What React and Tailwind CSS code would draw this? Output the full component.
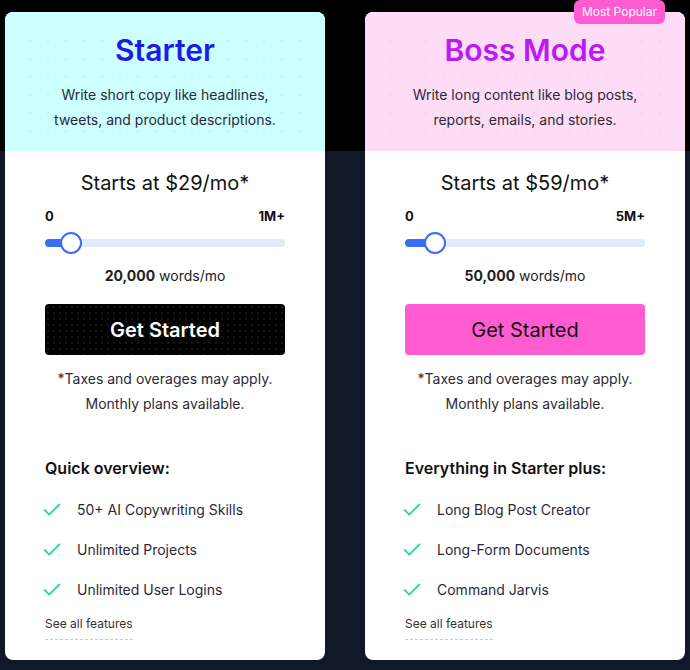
import { Check } from "lucide-react";

const plans = [
  {
    name: "Starter",
    nameColor: "text-[#1c1ce6]",
    head: "bg-[#ccfffd]",
    dots: "bg-[radial-gradient(#bff6f5_1px,transparent_1px)]",
    blurb: ["Write short copy like headlines,", "tweets, and product descriptions."],
    price: "$29",
    max: "1M+",
    words: "20,000",
    pos: 26,
    btn: "bg-black text-white font-semibold bg-[radial-gradient(#15151d_1px,transparent_1px)]",
    listTitle: "Quick overview:",
    features: ["50+ AI Copywriting Skills", "Unlimited Projects", "Unlimited User Logins"],
  },
  {
    name: "Boss Mode",
    nameColor: "text-[#b91cf2]",
    head: "bg-[#ffdcf6]",
    dots: "bg-[radial-gradient(#fad0ef_1px,transparent_1px)]",
    blurb: ["Write long content like blog posts,", "reports, emails, and stories."],
    price: "$59",
    max: "5M+",
    words: "50,000",
    pos: 30,
    btn: "bg-[#ff5cd1] text-[#111] font-normal",
    listTitle: "Everything in Starter plus:",
    features: ["Long Blog Post Creator", "Long-Form Documents", "Command Jarvis"],
    badge: "Most Popular",
  },
];

function Slider({ pos }) {
  return (
    <div className="relative mt-[7px] h-[20px] flex items-center">
      <div className="h-[8px] w-full rounded-full bg-[#e1eafb]" />
      <div className="absolute left-0 top-[6px] h-[8px] rounded-l-full bg-[#3b6cf5]" style={{ width: pos }} />
      <div
        className="absolute top-[-1px] h-[22px] w-[22px] rounded-full border-2 border-[#3b6cf5] bg-white"
        style={{ left: pos - 11 }}
      />
    </div>
  );
}

function Card({ p }) {
  return (
    <div className="relative flex h-[648px] flex-col rounded-lg bg-white">
      {p.badge && (
        <span className="absolute right-[20px] top-[-12px] rounded-md bg-[#ff5cd1] px-[8px] text-[12px] leading-[24px] text-white">
          {p.badge}
        </span>
      )}
      <div className={`${p.head} rounded-t-lg px-4 pt-[20px] pb-[19px] text-center`}>
        <div className={`${p.dots} bg-[size:18px_18px]`}>
          <h2 className={`${p.nameColor} text-[30px] font-semibold leading-[36px]`}>{p.name}</h2>
          <p className="mt-[14px] text-[14px] leading-[25px] text-[#2a2a3a]">
            {p.blurb[0]}
            <br />
            {p.blurb[1]}
          </p>
        </div>
      </div>
      <div className="flex flex-col px-[40px] pt-[18px]">
        <p className="text-center text-[20px] leading-[28px] text-[#111]">Starts at {p.price}/mo*</p>
        <div className="mt-[9px] flex justify-between text-[13px] font-bold leading-[20px] text-[#111]">
          <span>0</span>
          <span>{p.max}</span>
        </div>
        <Slider pos={p.pos} />
        <p className="mt-[13px] text-center text-[14px] leading-[20px] text-[#222]">
          <span className="font-bold">{p.words}</span> words/mo
        </p>
        <button className={`${p.btn} bg-[size:6px_6px] mt-[18px] h-[51px] rounded text-[20px]`}>Get Started</button>
        <p className="mt-[11px] text-center text-[14px] leading-[25px] text-[#2a2a3a]">
          *Taxes and overages may apply.
          <br />
          Monthly plans available.
        </p>
        <h3 className="mt-[40px] text-[16px] font-semibold leading-[24px] text-[#111]">{p.listTitle}</h3>
        <ul className="mt-[20px] flex flex-col gap-[20px]">
          {p.features.map((f) => (
            <li key={f} className="flex h-[20px] items-center gap-[14px] text-[14px] leading-[20px] text-[#2a2a3a]">
              <Check size={22} strokeWidth={2} className="-ml-[4px] text-[#34d399]" />
              {f}
            </li>
          ))}
        </ul>
        <div className="mt-[10px]">
          <span className="inline-block border-b border-dashed border-[#c8c8c8] pb-[7px] text-[12px] leading-[16px] text-[#333]">
            See all features
          </span>
        </div>
      </div>
    </div>
  );
}

export default function App() {
  return (
    <div
      className="grid h-[670px] w-[690px] grid-cols-2 gap-[40px] bg-[linear-gradient(to_bottom,#000_151px,#111827_151px)] px-[5px] pt-[12px]"
      style={{ fontFamily: "Inter, 'Noto Sans', sans-serif" }}
    >
      {plans.map((p) => (
        <Card key={p.name} p={p} />
      ))}
    </div>
  );
}
